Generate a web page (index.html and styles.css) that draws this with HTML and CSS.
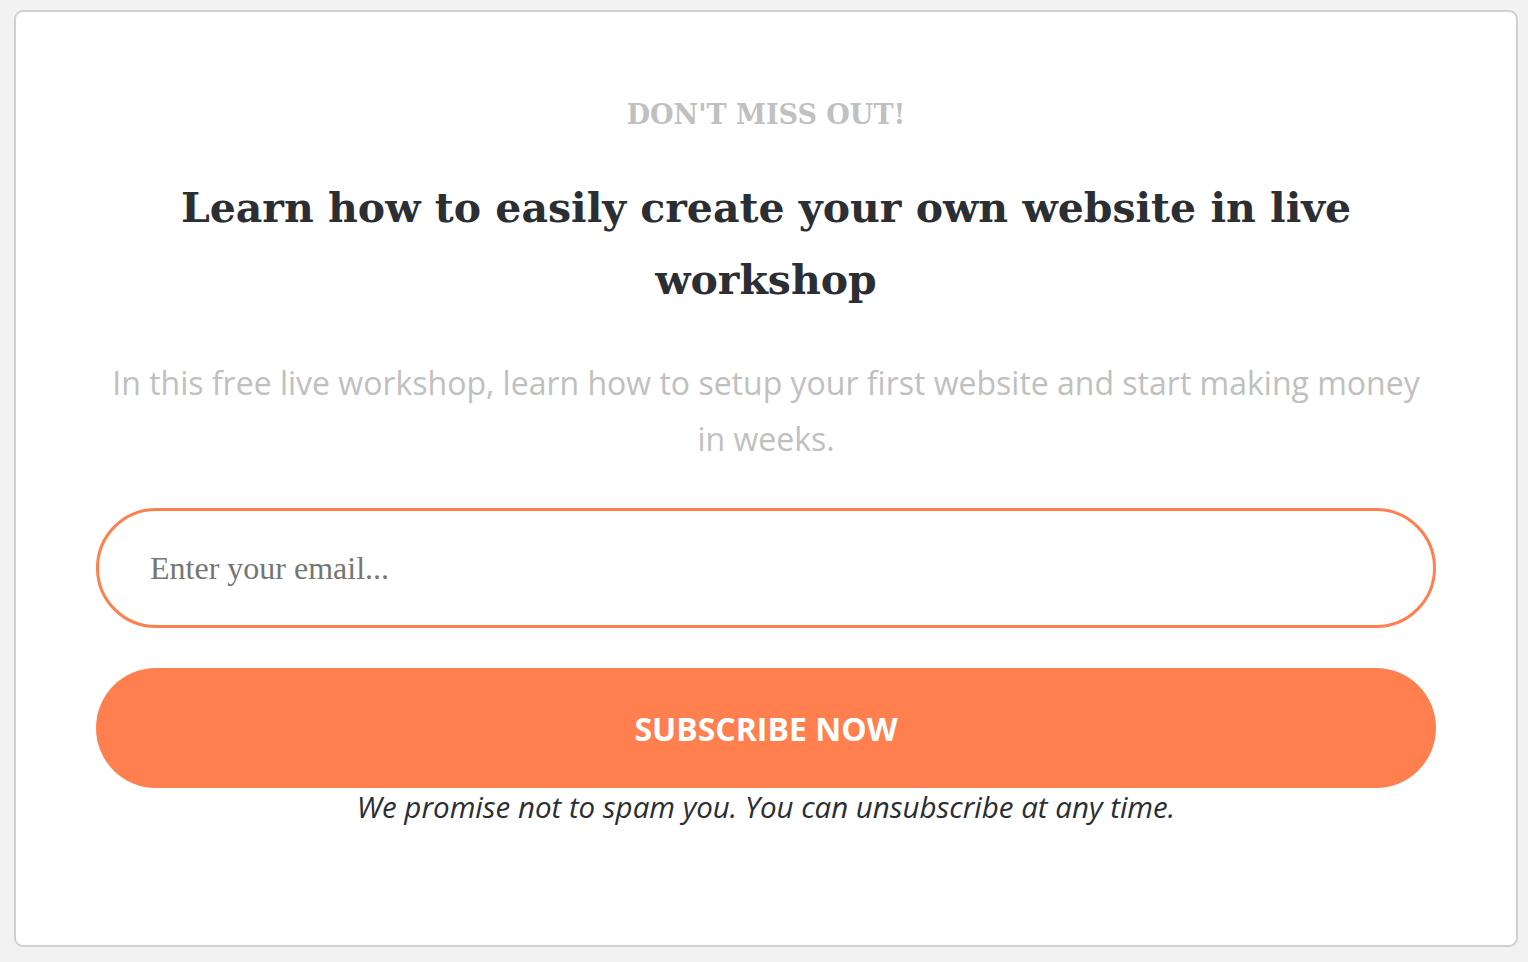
FILE: index.html
```html
<!DOCTYPE html>
<html lang="en">
<head>
<meta charset="utf-8">
<title>Subscribe</title>
<link rel="stylesheet" href="styles.css">
</head>
<body>
<div class="card">
  <p class="eyebrow">DON'T MISS OUT!</p>
  <h1 class="title">Learn how to easily create your own website in live workshop</h1>
  <p class="lead">In this free live workshop, learn how to setup your first website and start making money in weeks.</p>
  <form class="form">
    <input class="email" type="email" placeholder="Enter your email...">
    <button class="btn" type="button">SUBSCRIBE NOW</button>
  </form>
  <p class="note">We promise not to spam you. You can unsubscribe at any time.</p>
</div>
</body>
</html>
```
FILE: styles.css
```css
html, body { margin: 0; padding: 0; }
body {
  background: #f2f2f2;
  padding: 10px 10px 15px 14px;
  box-sizing: border-box;
  height: 962px;
}
.card {
  box-sizing: border-box;
  height: 937px;
  background: #fff;
  border: 2px solid #d0d0d0;
  border-radius: 9px;
  padding: 82px 80px 0;
  text-align: center;
}
.eyebrow {
  margin: 0;
  font-family: "DejaVu Serif", serif;
  font-weight: bold;
  font-size: 27px;
  line-height: 42px;
  color: #c0c0c0;
}
.title {
  margin: 36px 0 0;
  font-family: "DejaVu Serif", serif;
  font-weight: bold;
  font-size: 41px;
  line-height: 72px;
  color: #2b2e33;
}
.lead {
  margin: 39px 0 0;
  font-family: "Open Sans", sans-serif;
  font-size: 32px;
  line-height: 56px;
  color: #c0c0c0;
}
.form { margin: 41px 0 0; display: flex; flex-direction: column; gap: 40px; }
.email {
  box-sizing: border-box;
  height: 120px;
  width: 100%;
  border: 3px solid #ff7f4f;
  border-radius: 60px;
  padding: 0 0 0 51px;
  font-family: "Liberation Serif", serif;
  font-size: 32px;
  outline: none;
  background: #fff;
}
.email::placeholder { color: #757575; }
.btn {
  height: 120px;
  width: 100%;
  border: 0;
  border-radius: 60px;
  background: #ff7f4f;
  color: #fff;
  font-family: "Open Sans", sans-serif;
  font-weight: bold;
  font-size: 32px;
}
.note {
  margin: 0;
  font-family: "Open Sans", sans-serif;
  font-style: italic;
  font-size: 29.5px;
  line-height: 38px;
  color: #2b2e33;
}
```
